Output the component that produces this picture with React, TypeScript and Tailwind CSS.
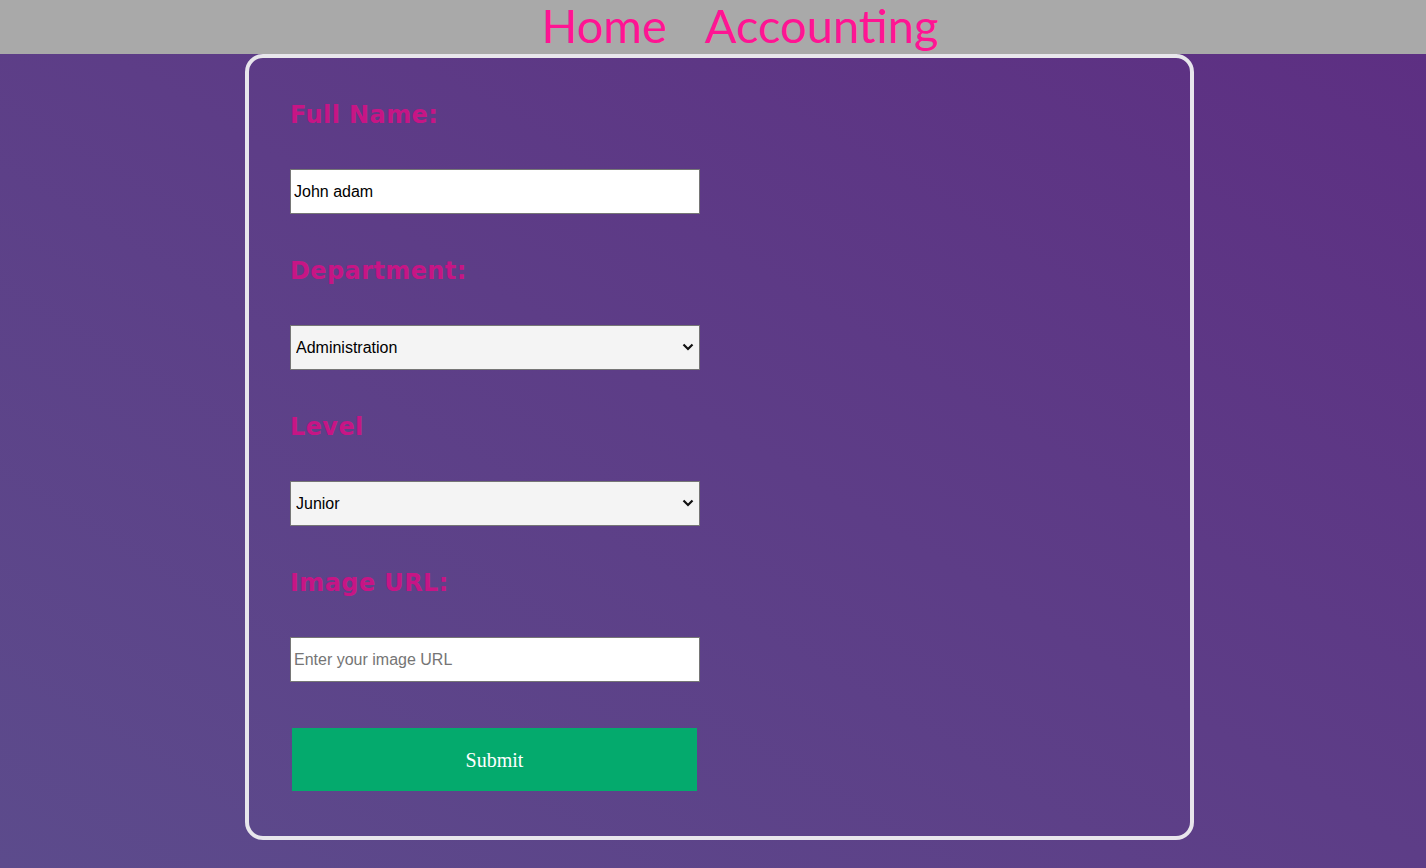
import { useState } from "react";

export default function App() {
  const [name, setName] = useState("John adam");
  const [dept, setDept] = useState("Administration");
  const [level, setLevel] = useState("Junior");
  const [url, setUrl] = useState("");

  return (
    <div className="min-h-screen w-full bg-linear-to-tr from-[#5c4b8c] to-[#5d2e82]">
      {/* Nav */}
      <nav className="h-[54px] bg-[#a9a9a9] flex justify-center items-start gap-[38px] pl-[54px] overflow-hidden">
        <a className="text-[#ff1493] text-[47px] leading-[50px] font-['Lato',sans-serif]">Home</a>
        <a className="text-[#ff1493] text-[47px] leading-[50px] font-['Lato',sans-serif]">Accounting</a>
      </nav>

      {/* Card */}
      <form
        className="ml-[245px] w-[949px] h-[786px] border-4 border-[#e8e6ec] rounded-[18px] pl-[41px] pt-[43px] font-['DejaVu_Sans',sans-serif]"
        onSubmit={(e) => e.preventDefault()}
      >
        <label className="block text-[#c71585] text-[24px] tracking-[0.4px] font-bold leading-[28px]">Full Name:</label>
        <input
          value={name}
          onChange={(e) => setName(e.target.value)}
          className="mt-[40px] block w-[410px] h-[45px] bg-white border border-[#767676] px-[3px] text-[16px] text-black font-['Liberation_Sans',sans-serif] outline-none"
        />

        <label className="mt-[43px] block text-[#c71585] text-[24px] tracking-[0.4px] font-bold leading-[28px]">Department:</label>
        <div className="relative mt-[40px] w-[410px] h-[45px]">
          <select
            value={dept}
            onChange={(e) => setDept(e.target.value)}
            className="appearance-none block w-full h-full bg-[#f4f4f4] border border-[#767676] pl-[5px] text-[16px] text-black font-['Liberation_Sans',sans-serif] outline-none"
          >
            <option>Administration</option>
            <option>Marketing</option>
            <option>Development</option>
            <option>Finance</option>
          </select>
          <svg className="absolute right-[6px] top-[17px] pointer-events-none" width="12" height="10" viewBox="0 0 12 10">
            <path d="M1.5 2.5 L6 7 L10.5 2.5" stroke="#111" strokeWidth="2.2" fill="none" />
          </svg>
        </div>

        <label className="mt-[43px] block text-[#c71585] text-[24px] tracking-[0.4px] font-bold leading-[28px]">Level</label>
        <div className="relative mt-[40px] w-[410px] h-[45px]">
          <select
            value={level}
            onChange={(e) => setLevel(e.target.value)}
            className="appearance-none block w-full h-full bg-[#f4f4f4] border border-[#767676] pl-[5px] text-[16px] text-black font-['Liberation_Sans',sans-serif] outline-none"
          >
            <option>Junior</option>
            <option>Mid-Senior</option>
            <option>Senior</option>
          </select>
          <svg className="absolute right-[6px] top-[17px] pointer-events-none" width="12" height="10" viewBox="0 0 12 10">
            <path d="M1.5 2.5 L6 7 L10.5 2.5" stroke="#111" strokeWidth="2.2" fill="none" />
          </svg>
        </div>

        <label className="mt-[43px] block text-[#c71585] text-[24px] tracking-[0.4px] font-bold leading-[28px]">Image URL:</label>
        <input
          value={url}
          onChange={(e) => setUrl(e.target.value)}
          placeholder="Enter your image URL"
          className="mt-[40px] block w-[410px] h-[45px] bg-white border border-[#767676] px-[3px] text-[16px] text-black placeholder:text-[#757575] font-['Liberation_Sans',sans-serif] outline-none"
        />

        <button
          type="submit"
          className="mt-[46px] ml-[2px] block w-[405px] h-[63px] bg-[#04aa6d] text-white text-[20px] font-['Liberation_Serif',serif]"
        >
          Submit
        </button>
      </form>
    </div>
  );
}
